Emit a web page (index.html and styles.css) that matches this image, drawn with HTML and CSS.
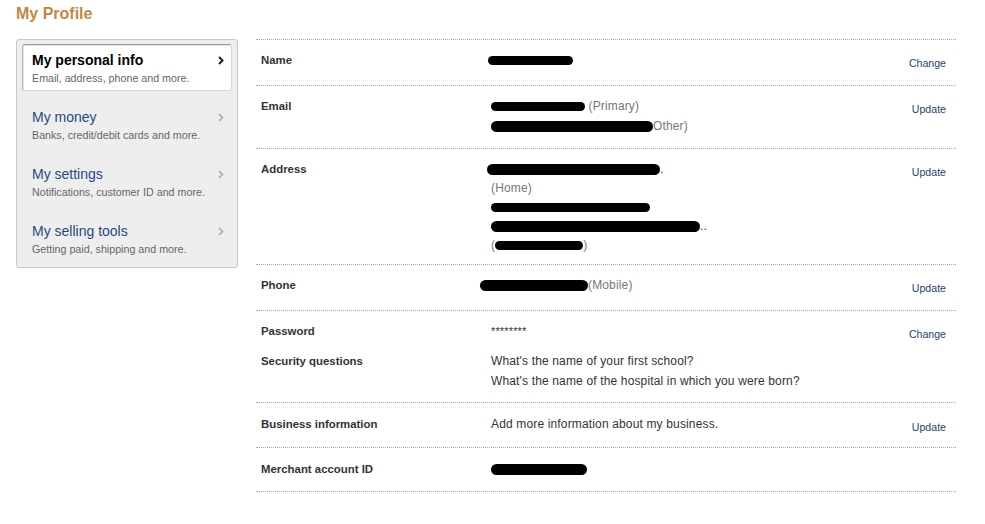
FILE: index.html
```html
<!DOCTYPE html>
<html>
<head>
<meta charset="utf-8">
<link rel="stylesheet" href="styles.css">
</head>
<body>
<div class="page">
  <h1 class="title">My Profile</h1>
  <div class="layout">
    <nav class="side">
      <a class="item active">
        <div class="item-text">
          <div class="item-title">My personal info</div>
          <div class="item-sub">Email, address, phone and more.</div>
        </div>
        <svg class="chev" width="6" height="9" viewBox="0 0 6 9"><path d="M1 1 L4.5 4.5 L1 8" fill="none" stroke="#222" stroke-width="2"/></svg>
      </a>
      <a class="item">
        <div class="item-text">
          <div class="item-title">My money</div>
          <div class="item-sub">Banks, credit/debit cards and more.</div>
        </div>
        <svg class="chev" width="6" height="9" viewBox="0 0 6 9"><path d="M1 1 L4.5 4.5 L1 8" fill="none" stroke="#aaa" stroke-width="1.6"/></svg>
      </a>
      <a class="item">
        <div class="item-text">
          <div class="item-title">My settings</div>
          <div class="item-sub">Notifications, customer ID and more.</div>
        </div>
        <svg class="chev" width="6" height="9" viewBox="0 0 6 9"><path d="M1 1 L4.5 4.5 L1 8" fill="none" stroke="#aaa" stroke-width="1.6"/></svg>
      </a>
      <a class="item">
        <div class="item-text">
          <div class="item-title">My selling tools</div>
          <div class="item-sub">Getting paid, shipping and more.</div>
        </div>
        <svg class="chev" width="6" height="9" viewBox="0 0 6 9"><path d="M1 1 L4.5 4.5 L1 8" fill="none" stroke="#aaa" stroke-width="1.6"/></svg>
      </a>
    </nav>

    <section class="info">
      <div class="row r-name">
        <div class="label">Name</div>
        <div class="value"><div class="line"><span class="blot" style="width:85px;margin-left:-3px"></span></div></div>
        <div class="action">Change</div>
      </div>
      <div class="row r-email">
        <div class="label">Email</div>
        <div class="value lines20">
          <div class="line"><span class="blot" style="width:94px"></span> <span class="muted">(Primary)</span></div>
          <div class="line"><span class="blot thick" style="width:162px"></span><span class="muted">Other)</span></div>
        </div>
        <div class="action">Update</div>
      </div>
      <div class="row r-address">
        <div class="label">Address</div>
        <div class="value">
          <div class="line"><span class="blot thick" style="width:173px;margin-left:-4px"></span>.</div>
          <div class="line muted">(Home)</div>
          <div class="line"><span class="blot" style="width:159px"></span></div>
          <div class="line"><span class="blot thick" style="width:209px"></span>..</div>
          <div class="line"><span class="muted">(</span><span class="blot" style="width:88px"></span><span class="muted">)</span></div>
        </div>
        <div class="action">Update</div>
      </div>
      <div class="row r-phone">
        <div class="label">Phone</div>
        <div class="value"><div class="line"><span class="blot thick" style="width:108px;margin-left:-11px"></span><span class="muted">(Mobile)</span></div></div>
        <div class="action">Update</div>
      </div>
      <div class="row r-security">
        <div class="labels">
          <div class="label">Password</div>
          <div class="label second">Security questions</div>
        </div>
        <div class="value">
          <div class="line stars">********</div>
          <div class="line second">What's the name of your first school?</div>
          <div class="line third">What's the name of the hospital in which you were born?</div>
        </div>
        <div class="action">Change</div>
      </div>
      <div class="row r-business">
        <div class="label">Business information</div>
        <div class="value"><div class="line">Add more information about my business.</div></div>
        <div class="action">Update</div>
      </div>
      <div class="row r-merchant">
        <div class="label">Merchant account ID</div>
        <div class="value"><div class="line"><span class="blot thick" style="width:96px"></span></div></div>
        <div class="action"></div>
      </div>
    </section>
  </div>
</div>
</body>
</html>
```

FILE: styles.css
```css
* { box-sizing: border-box; }
html, body { margin: 0; padding: 0; background: #fff; }
body {
  font-family: "Liberation Sans", Arial, sans-serif;
  color: #333;
}
.page { padding: 0 16px; width: 985px; }
.title {
  margin: 0;
  padding-top: 4px;
  height: 39px;
  font-size: 16px;
  line-height: 20px;
  font-weight: bold;
  color: #c4873f;
}
.layout {
  display: flex;
  align-items: flex-start;
  gap: 18px;
}
.side {
  width: 222px;
  background: #eeeeee;
  border: 1px solid #c8c8c8;
  border-radius: 3px;
  padding: 4px 5px 5px;
  display: flex;
  flex-direction: column;
  gap: 10px;
}
.item {
  display: flex;
  align-items: flex-start;
  justify-content: space-between;
  height: 47px;
  padding: 6px 7px 0 9px;
  border: 1px solid transparent;
  border-radius: 3px;
}
.item.active {
  background: #fff;
  border-color: #d6d6d6;
  border-top-color: #9a9a9a;
  border-left-color: #b8b8b8;
  box-shadow: inset 1px 1px 0 #e4e4e4;
}
.item-title {
  font-size: 14px;
  line-height: 18px;
  color: #244a86;
}
.item.active .item-title { color: #000; font-weight: bold; }
.item-sub {
  margin-top: 2px;
  font-size: 10.7px;
  line-height: 15px;
  color: #666;
}
.chev { margin-top: 5px; }

.info {
  width: 700px;
  border-top: 1px dotted #a8a8a8;
}
.row {
  display: flex;
  align-items: flex-start;
  padding: 11px 10px 15px 5px;
  border-bottom: 1px dotted #a8a8a8;
}
.label, .labels {
  width: 230px;
  flex: none;
}
.label {
  font-size: 11.4px;
  line-height: 19px;
  font-weight: bold;
  color: #333;
}
.value {
  flex: 1;
  font-size: 12px;
  letter-spacing: 0.15px;
  line-height: 19px;
  color: #333;
}
.lines20 .line + .line { margin-top: 1px; }
.muted { color: #777; }
.blot {
  display: inline-block;
  height: 9px;
  background: #000;
  border-radius: 5px;
  vertical-align: -1px;
}
.blot.thick { height: 11px; border-radius: 6px; vertical-align: -2px; }
.action {
  width: 60px;
  height: 19px;
  text-align: right;
  font-size: 10.6px;
  line-height: 19px;
  color: #1f3f6e;
  padding-top: 3px;
}
.r-email { padding-bottom: 12px; }
.r-address { padding-bottom: 9px; }
.r-security { padding-bottom: 11px; }
.r-business { padding-top: 12px; padding-bottom: 13px; }
.r-merchant { padding-top: 12px; padding-bottom: 12px; }
.label.second { margin-top: 11px; }
.line.second { margin-top: 11px; }
.line.third { margin-top: 1px; }
.stars { font-size: 11px; }
```
